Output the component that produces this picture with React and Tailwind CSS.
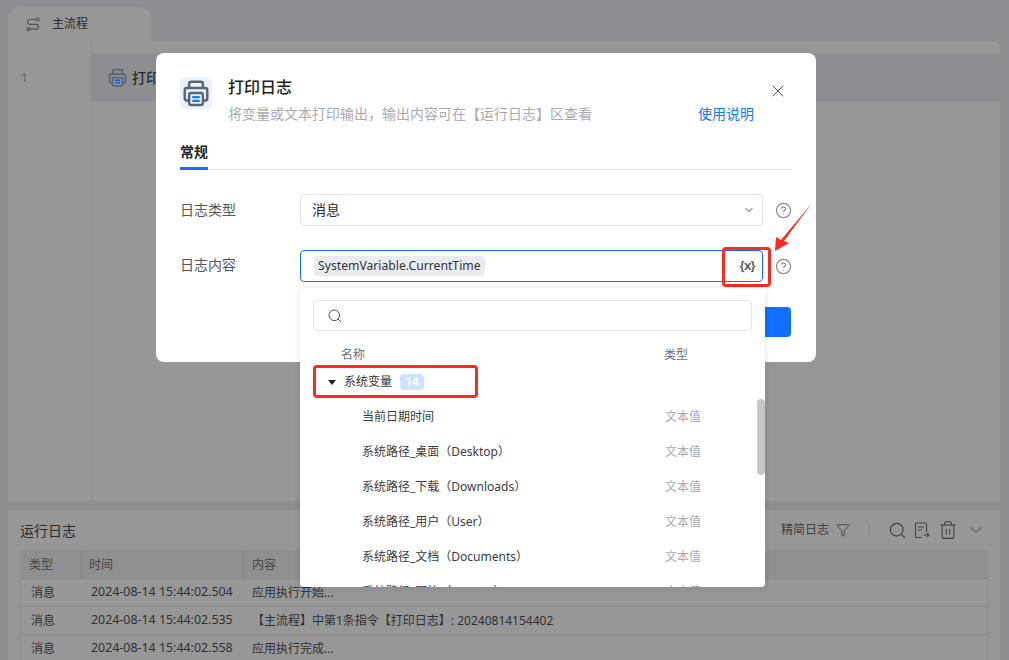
import React from "react";
import { ChevronDown, Search, Trash2, X, Funnel, CircleHelp } from "lucide-react";

const logs = [
  { time: "2024-08-14 15:44:02.504", text: "应用执行开始..." },
  { time: "2024-08-14 15:44:02.535", text: "【主流程】中第1条指令【打印日志】: 20240814154402" },
  { time: "2024-08-14 15:44:02.558", text: "应用执行完成..." },
];

const vars = [
  "当前日期时间",
  "系统路径_桌面（Desktop）",
  "系统路径_下载（Downloads）",
  "系统路径_用户（User）",
  "系统路径_文档（Documents）",
  "系统路径_图片（Images）",
];

const PrinterIcon = ({ size, blue = "#1677ff", fill = "#eaf2ff" }) => (
  <svg width={size} height={size} viewBox="0 0 24 24" fill="none">
    <path d="M6.500 8V4.600c0-.9.7-1.600 1.600-1.600h7.800c.9 0 1.600.7 1.600 1.600V8" stroke="#5c6478" strokeWidth="2" />
    <path d="M6 18H4.600C3.700 18 3 17.300 3 16.400V9.600C3 8.700 3.700 8 4.600 8h14.800c.9 0 1.600.7 1.600 1.600v6.800c0 .9-.7 1.600-1.600 1.600H18" stroke="#5c6478" strokeWidth="2" />
    <rect x="6.500" y="12" width="11" height="9.500" rx="1.500" fill={fill} stroke="#5c6478" strokeWidth="2" />
    <path d="M9 15.300h6M9 18.300h6" stroke={blue} strokeWidth="1.800" />
  </svg>
);

const FlowIcon = () => (
  <svg width="14" height="15" viewBox="0 0 14 15" fill="none" stroke="#4f5156" strokeWidth="1.200">
    <path d="M9.800 2.500H4a2.400 2.400 0 0 0 0 4.800h6a2.400 2.400 0 0 1 0 4.800H4.200" />
    <circle cx="11.500" cy="2.500" r="1.500" />
    <circle cx="2.500" cy="12.100" r="1.500" />
  </svg>
);

const ExportLogIcon = () => (
  <svg width="16" height="17" viewBox="0 0 16 17" fill="none" stroke="#45474b" strokeWidth="1.200">
    <path d="M8 15.500H2.500a1 1 0 0 1-1-1V2a1 1 0 0 1 1-1h9a1 1 0 0 1 1 1v8" />
    <path d="M4 5h6M4 8h4" />
    <path d="M9.500 13h5.500M13 11l2 2-2 2" />
  </svg>
);

export default function App() {
  return (
    <div className="relative w-[1009px] h-[660px] overflow-hidden bg-[#8d8e91] pl-2 pr-[9px] text-[13px] text-[#2b2c2e] font-['Noto_Sans','Noto_Sans_CJK_SC',sans-serif]">
      {/* tab bar */}
      <div className="pt-[7px] h-[41px] flex">
        <div className="w-[143px] h-[34px] rounded-t-xl bg-[#979797] flex items-center pl-[18px] gap-[12px] text-[12px]">
          <FlowIcon />
          <span>主流程</span>
        </div>
      </div>

      {/* canvas */}
      <div className="h-[460px] bg-[#979797] rounded-tr-md flex">
        <div className="w-[84px] border-r border-[#8d8e91] pt-[28px] pl-[13px] text-[12px] text-[#66676a]">1</div>
        <div className="flex-1 pt-3">
          <div className="h-[48px] bg-[#8d8e91] flex items-center pl-[15px] gap-1 font-medium">
            <PrinterIcon size={21} blue="#1c5fc4" fill="#8d9bb0" />
            <span className="text-[14px]">打印日志</span>
          </div>
        </div>
      </div>

      {/* log panel */}
      <div className="mt-[9px] h-[150px] bg-[#979797] px-3">
        <div className="h-[40px] flex items-center justify-between">
          <span className="text-[14px]">运行日志</span>
          <div className="flex items-center text-[#3f4144] text-[12px] mr-[2px]">
            <span>精简日志</span>
            <Funnel size={14} strokeWidth={1.500} className="ml-[7px]" />
            <span className="w-px h-[13px] bg-[#8a8b8e] ml-[19px]" />
            <Search size={19} strokeWidth={1.500} className="ml-[18px]" />
            <span className="ml-[7px]"><ExportLogIcon /></span>
            <Trash2 size={20} strokeWidth={1.300} className="ml-[8px]" />
            <ChevronDown size={20} strokeWidth={1.300} className="ml-[8px] text-[#66676a]" />
          </div>
        </div>
        <div className="w-[968px] rounded-t-md border border-[#8f8f8f]">
          <div className="h-[27px] bg-[#8f8f90] flex items-center text-[12px] text-[#454649]">
            <div className="w-[60px] pl-2 h-full flex items-center border-r border-[#878787]">类型</div>
            <div className="w-[163px] pl-2 h-full flex items-center border-r border-[#878787]">时间</div>
            <div className="flex-1 pl-2">内容</div>
          </div>
          {logs.map((log, i) => (
            <div key={i} className="h-[28px] border-t border-[#8a8a8a] flex items-center text-[12px] text-[#303134] whitespace-nowrap">
              <div className="w-[60px] pl-[10px]">消息</div>
              <div className="w-[163px] pl-[10px] text-[12.400px]">{log.time}</div>
              <div className="flex-1 pl-2">{log.text}</div>
            </div>
          ))}
        </div>
      </div>

      {/* modal */}
      <div className="absolute left-[156px] top-[53px] w-[660px] h-[309px] bg-white rounded-lg px-6 pt-6">
        <button className="absolute right-[28px] top-[28px] text-[#4e5158]">
          <X size={20} strokeWidth={1.200} />
        </button>
        <div className="flex gap-4 h-[50px]">
          <div className="w-8 h-8 rounded bg-[#eaf2ff] flex items-center justify-center">
            <PrinterIcon size={30} />
          </div>
          <div className="flex-1">
            <h2 className="text-[16px] leading-[20px] font-medium text-[#1d1f23]">打印日志</h2>
            <div className="mt-[7px] flex justify-between pr-[38px] leading-[20px] text-[14px]">
              <span className="text-[#a8aab0]">将变量或文本打印输出，输出内容可在【运行日志】区查看</span>
              <span className="text-[#1677ff]">使用说明</span>
            </div>
          </div>
        </div>
        <div className="mt-[16px] border-b border-[#e6e7eb] h-[27px]">
          <div className="inline-block h-[27px] border-b-[3px] border-[#0f6fff] text-[14px] font-bold leading-[18px] text-[#24262a]">常规</div>
        </div>
        <div className="mt-[24px] flex items-center">
          <label className="w-[120px] pb-[2px] text-[14px] text-[#55575c]">日志类型</label>
          <div className="w-[463px] h-8 border border-[#e2e3e8] rounded flex items-center justify-between pl-[11px] pr-[7px] text-[14px]">
            <span className="pb-[2px]">消息</span>
            <ChevronDown size={12} className="text-[#45474d]" />
          </div>
          <CircleHelp size={17} strokeWidth={1.800} className="ml-[12px] text-[#8b8e94]" />
        </div>
        <div className="mt-[24px] flex items-center">
          <label className="w-[120px] pb-[4px] text-[14px] text-[#55575c]">日志内容</label>
          <div className="w-[463px] h-8 border border-[#0f6fff] rounded flex items-center justify-between pl-[13px] pr-[7px]">
            <span className="h-5 bg-[#e9ebef] rounded px-1 text-[12.200px] leading-[20px] text-[#33353a]">SystemVariable.CurrentTime</span>
            <span className="text-[13px] font-semibold tracking-tighter text-[#50535a]">{"{x}"}</span>
          </div>
          <CircleHelp size={17} strokeWidth={1.800} className="ml-[12px] text-[#8b8e94]" />
        </div>
        <div className="mt-[25px] mr-px flex justify-end">
          <button className="w-[80px] h-[30px] bg-[#0f6fff] rounded" />
        </div>
      </div>

      {/* variable dropdown */}
      <div className="absolute left-[300px] top-[288px] w-[465px] h-[299px] bg-white rounded-b shadow-[0_0_6px_rgba(0,0,0,0.12)] overflow-hidden">
        <div className="mx-[13px] mt-3 h-[31px] border border-[#e2e3e8] rounded flex items-center pl-[13px]">
          <Search size={16} strokeWidth={1.500} className="text-[#4e5158]" />
        </div>
        <div className="mt-[14px] h-[20px] flex items-center text-[12px] text-[#6e7076]">
          <span className="ml-[41px] w-[323px]">名称</span>
          <span>类型</span>
        </div>
        <div className="h-[34px] flex items-center text-[12px] text-[#33353a]">
          <span className="ml-[28px] w-0 h-0 border-x-[4px] border-x-transparent border-t-[5px] border-t-[#222]" />
          <span className="ml-2">系统变量</span>
          <span className="ml-2 w-6 h-4 rounded bg-[#cfe2ff] text-white text-[12px] font-semibold flex items-center justify-center">14</span>
        </div>
        {vars.map((name) => (
          <div key={name} className="h-[35px] flex items-center text-[12px]">
            <span className="ml-[62px] w-[303px] text-[#3a3c41]">{name}</span>
            <span className="text-[#a8aab0]">文本值</span>
          </div>
        ))}
        <div className="absolute right-0 top-[111px] w-2 h-[76px] rounded bg-[#c6c7c9]" />
      </div>

      {/* red annotations */}
      <div className="absolute left-[722px] top-[247px] w-[49px] h-[40px] border-[3px] border-[#fb2b1f] rounded" />
      <div className="absolute left-[313px] top-[365px] w-[165px] h-[33px] border-[3px] border-[#fb2b1f] rounded" />
      <svg className="absolute left-[770px] top-[200px]" width="46" height="54" viewBox="770 200 46 54">
        <polygon points="812,203 784,241 789,243 775,251 776,237 781,240" fill="#fb2b1f" />
      </svg>
    </div>
  );
}
